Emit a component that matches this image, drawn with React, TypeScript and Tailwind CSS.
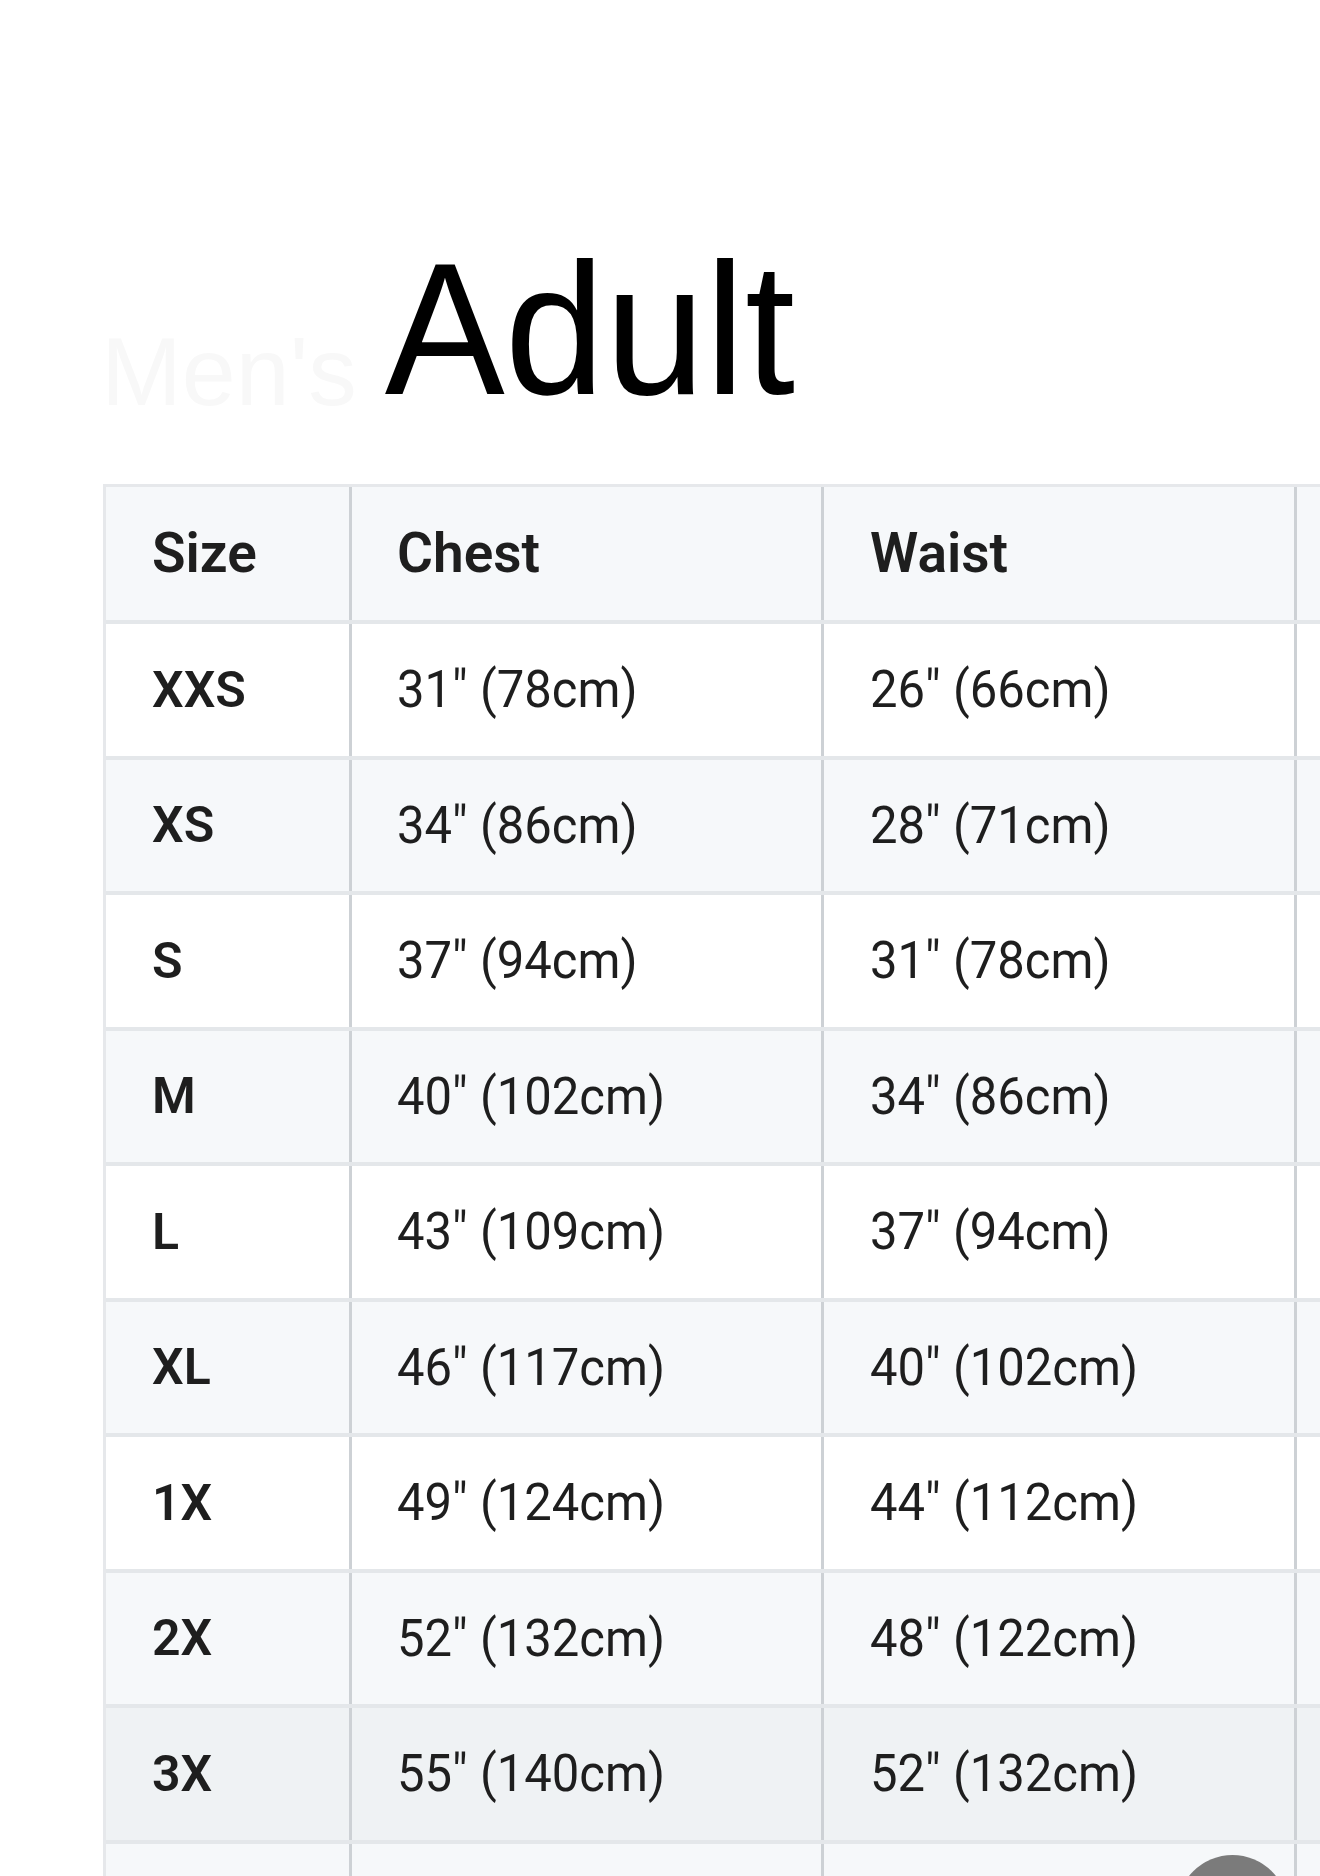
type Row = {
  size: string;
  chest: string;
  waist: string;
  bg: string;
};

const rows: Row[] = [
  { size: "XXS", chest: "31\" (78cm)", waist: "26\" (66cm)", bg: "bg-white" },
  { size: "XS", chest: "34\" (86cm)", waist: "28\" (71cm)", bg: "bg-[#f6f8fa]" },
  { size: "S", chest: "37\" (94cm)", waist: "31\" (78cm)", bg: "bg-white" },
  { size: "M", chest: "40\" (102cm)", waist: "34\" (86cm)", bg: "bg-[#f6f8fa]" },
  { size: "L", chest: "43\" (109cm)", waist: "37\" (94cm)", bg: "bg-white" },
  { size: "XL", chest: "46\" (117cm)", waist: "40\" (102cm)", bg: "bg-[#f6f8fa]" },
  { size: "1X", chest: "49\" (124cm)", waist: "44\" (112cm)", bg: "bg-white" },
  { size: "2X", chest: "52\" (132cm)", waist: "48\" (122cm)", bg: "bg-[#f6f8fa]" },
  { size: "3X", chest: "55\" (140cm)", waist: "52\" (132cm)", bg: "bg-[#eff2f4]" },
  { size: "", chest: "", waist: "", bg: "bg-[#f6f8fa]" },
];

const font = "font-['Roboto','Liberation_Sans',sans-serif]";

function Cell({
  children,
  width,
  head,
  title,
  pad,
}: {
  children?: React.ReactNode;
  width: string;
  head?: boolean;
  title?: boolean;
  pad: string;
}) {
  const text = title
    ? "text-[55px] font-semibold"
    : head
      ? "text-[50px] font-semibold"
      : "text-[49px] font-normal scale-y-[1.06]";
  return (
    <div
      className={`${width} ${pad} flex shrink-0 items-center border-r-[3px] border-[#cdd1d5]`}
    >
      <span className={`inline-block ${font} leading-none text-[#1e1e1e] ${text}`}>
        {children}
      </span>
    </div>
  );
}

export default function App() {
  return (
    <div className="relative h-[1876px] w-[1320px] overflow-hidden bg-white">
      <div className="flex items-start pl-[101px] pt-[240px]">
        <span className="mt-[83px] font-['Liberation_Sans',Arial,sans-serif] text-[97px] leading-none text-[#f8f8f8]">
          Men's
        </span>
        <span className="ml-[28px] inline-block scale-y-[1.04] font-['Liberation_Sans',Arial,sans-serif] text-[180px] leading-none text-black">
          Adult
        </span>
      </div>

      <div className="ml-[103px] mt-[64px] border-l-[3px] border-t-[3px] border-[#e6e8eb]">
        <div className="flex h-[137px] border-b-4 border-[#e4e7ea] bg-[#f6f8fa]">
          <Cell width="w-[246px]" pad="pl-[46px]" title>
            Size
          </Cell>
          <Cell width="w-[472px]" pad="pl-[45px]" title>
            Chest
          </Cell>
          <Cell width="w-[473px]" pad="pl-[46px]" title>
            Waist
          </Cell>
          <div className="flex-1" />
        </div>

        {rows.map((r, i) => (
          <div
            key={i}
            className={`flex h-[135.5px] border-b-4 border-[#e4e7ea] ${r.bg}`}
          >
            <Cell width="w-[246px]" pad="pl-[46px]" head>
              {r.size}
            </Cell>
            <Cell width="w-[472px]" pad="pl-[45px]">
              {r.chest}
            </Cell>
            <Cell width="w-[473px]" pad="pl-[46px]">
              {r.waist}
            </Cell>
            <div className="flex-1" />
          </div>
        ))}
      </div>

      {/* floating scroll button, cut off by the bottom edge */}
      <div className="absolute left-[1177px] top-[1855px] h-[111px] w-[111px] rounded-full bg-[#7b7b7b]" />
    </div>
  );
}
